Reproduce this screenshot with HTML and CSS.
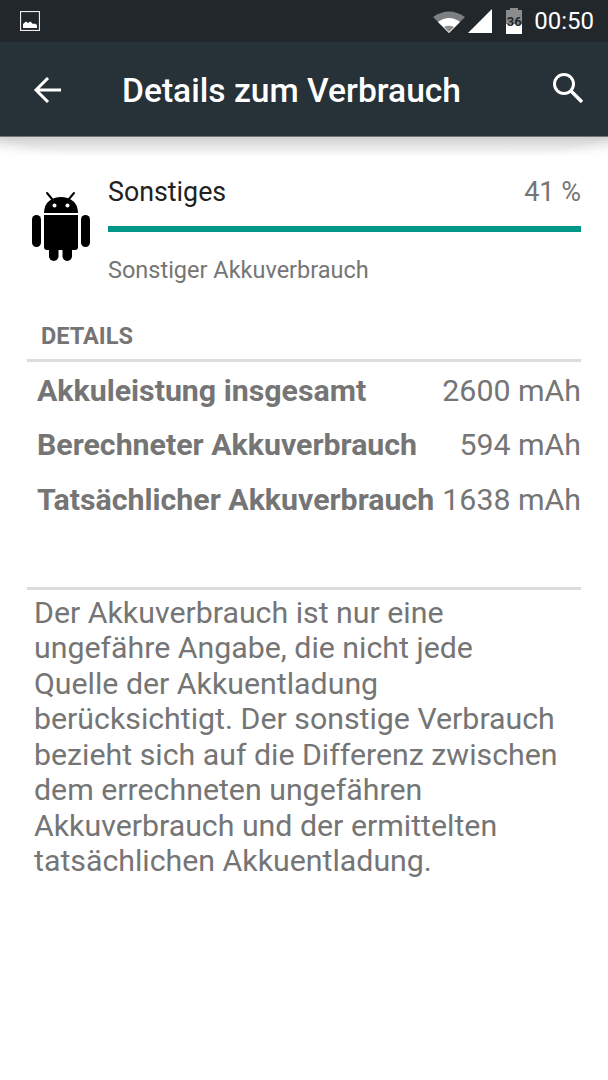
FILE: index.html

```html
<!DOCTYPE html>
<html>
  <head>
    <meta charset="utf-8">
    <title>Details zum Verbrauch</title>
    <link rel="stylesheet" href="styles.css">
  </head>
  <body>
    <div class="statusbar">
      <svg class="status-pic" width="20" height="20" viewBox="0 0 20 20">
        <rect x="0.5" y="0.5" width="19" height="19" fill="none" stroke="#eee" stroke-width="1.2"/>
        <path d="M3 17V13L6 10.500 8 12 10.500 10.500 13 13 15 12.500 17 14V17Z" fill="#fff"/>
      </svg>
      <div class="status-right">
        <svg width="34" height="24" viewBox="0 0 34 24">
          <path d="M1 8Q17-3 33 8L17 24Z" fill="#7d7f80"/>
          <path d="M6 13Q17 5 28 13L17 24Z" fill="#fff"/>
          <path d="M12 18Q17 15.500 22 18L17 23Z" fill="#8d8f90"/>
        </svg>
        <svg class="status-signal" width="24" height="24" viewBox="0 0 24 24">
          <path d="M0 24L24 0V24Z" fill="#fff"/>
        </svg>
        <div class="battery">
          <div class="battery-cap"></div>
          <div class="battery-body"><span class="battery-num">36</span></div>
        </div>
        <span class="clock">00:50</span>
      </div>
    </div>

    <div class="toolbar">
      <svg class="back" width="30" height="30" viewBox="0 0 30 30">
        <path d="M28 15H4M15 3L3 15 15 27" fill="none" stroke="#fff" stroke-width="3"/>
      </svg>
      <h1 class="title">Details zum Verbrauch</h1>
      <svg class="search" width="32" height="32" viewBox="0 0 32 32">
        <circle cx="13" cy="13" r="9.500" fill="none" stroke="#fff" stroke-width="3"/>
        <path d="M20 20L31 31" stroke="#fff" stroke-width="3.500"/>
      </svg>
    </div>
    <div class="toolbar-shadow"></div>

    <div class="content">
      <div class="app-row">
        <svg class="android" width="58" height="72" viewBox="0 0 58 72">
          <path d="M15 3L20 9M42 3L37 9" stroke="#000" stroke-width="2" stroke-linecap="round"/>
          <path d="M12 23C12 12 20 7 29 7S46 12 46 23Z" fill="#000"/>
          <circle cx="22.500" cy="15.500" r="2" fill="#fff"/>
          <circle cx="35.500" cy="15.500" r="2" fill="#fff"/>
          <path d="M12 25H46V57Q46 60 43 60H15Q12 60 12 57Z" fill="#000"/>
          <rect x="0" y="25" width="9" height="32" rx="4.500" fill="#000"/>
          <rect x="49" y="25" width="9" height="32" rx="4.500" fill="#000"/>
          <rect x="17" y="52" width="9.500" height="19" rx="4.700" fill="#000"/>
          <rect x="30.500" y="52" width="9.500" height="19" rx="4.700" fill="#000"/>
        </svg>
        <div class="app-info">
          <div class="app-head">
            <span class="app-name">Sonstiges</span>
            <span class="app-percent">41 %</span>
          </div>
          <div class="bar"></div>
          <div class="app-sub">Sonstiger Akkuverbrauch</div>
        </div>
      </div>

      <div class="section-title">DETAILS</div>
      <div class="rows">
        <div class="row"><span class="row-label">Akkuleistung insgesamt</span><span class="row-value">2600 mAh</span></div>
        <div class="row"><span class="row-label">Berechneter Akkuverbrauch</span><span class="row-value">594 mAh</span></div>
        <div class="row"><span class="row-label">Tatsächlicher Akkuverbrauch</span><span class="row-value">1638 mAh</span></div>
      </div>
      <p class="note">Der Akkuverbrauch ist nur eine ungefähre Angabe, die nicht jede Quelle der Akkuentladung berücksichtigt. Der sonstige Verbrauch bezieht sich auf die Differenz zwischen dem errechneten ungefähren Akkuverbrauch und der ermittelten tatsächlichen Akkuentladung.</p>
    </div>
  </body>
</html>
```

FILE: styles.css

```css
* {
  box-sizing: border-box;
}

body {
  margin: 0;
  height: 1080px;
  overflow: hidden;
  background-color: #fff;
  font-family: Roboto, "Liberation Sans", sans-serif;
}

.statusbar {
  display: flex;
  align-items: center;
  justify-content: space-between;
  height: 42px;
  padding: 0 14px 0 20px;
  background-color: #21272b;
}

.status-right {
  display: flex;
  align-items: center;
}

.status-signal {
  margin-left: 2px;
}

.battery {
  width: 16px;
  margin-left: 14px;
}

.battery-cap {
  width: 8px;
  height: 2px;
  margin: 0 auto;
  background-color: #8a8c8d;
}

.battery-body {
  height: 24px;
  background: linear-gradient(#8a8c8d 0 58%, #fff 58%);
  text-align: center;
}

.battery-num {
  display: block;
  padding-top: 4px;
  font-size: 13px;
  line-height: 15px;
  font-weight: 700;
  color: #21272b;
}

.clock {
  margin-left: 12px;
  font-size: 24px;
  color: #fff;
}

.toolbar {
  display: flex;
  align-items: center;
  height: 95px;
  padding: 0 25px 0 33px;
  background-color: #263238;
  border-bottom: 1px solid #6e7578;
}

.back {
  margin-top: 2px;
}

.title {
  flex-grow: 1;
  margin: 2px 0 0 59px;
  font-size: 33.600px;
  font-weight: 500;
  color: #fff;
}

.search {
  margin-bottom: 4px;
}

.toolbar-shadow {
  height: 20px;
  background:
    linear-gradient(to top right, #fff 0, rgba(255, 255, 255, 0) 50%) left bottom / 80px 20px no-repeat,
    linear-gradient(to top left, #fff 0, rgba(255, 255, 255, 0) 50%) right bottom / 80px 20px no-repeat,
    linear-gradient(#d0d0d0, #fff);
}

.content {
  padding: 0 27px;
}

.app-row {
  display: flex;
  padding-left: 5px;
}

.android {
  flex-shrink: 0;
  margin-top: 33px;
}

.app-info {
  flex-grow: 1;
  margin-left: 18px;
  padding-top: 17px;
}

.app-head {
  display: flex;
  justify-content: space-between;
  line-height: 36px;
}

.app-name {
  font-size: 26.800px;
  color: #212121;
}

.app-percent {
  font-size: 27px;
  color: #757575;
}

.bar {
  height: 6px;
  margin-top: 16px;
  background-color: #009688;
}

.app-sub {
  margin-top: 23px;
  font-size: 23.500px;
  line-height: 30px;
  color: #757575;
}

.section-title {
  margin-top: 37px;
  padding: 0 0 9px 14px;
  border-bottom: 3px solid #ddd;
  font-size: 23.500px;
  line-height: 28px;
  font-weight: 700;
  color: #757575;
}

.rows {
  padding: 1px 0 0 10px;
}

.row {
  display: flex;
  justify-content: space-between;
  height: 54.500px;
  align-items: center;
  font-size: 30.300px;
  color: #757575;
}

.row-label {
  font-weight: 700;
}

.note {
  margin: 60px 0 0;
  padding: 5px 20px 0 7px;
  border-top: 3px solid #ddd;
  font-size: 30.300px;
  line-height: 35.500px;
  color: #757575;
}
```
